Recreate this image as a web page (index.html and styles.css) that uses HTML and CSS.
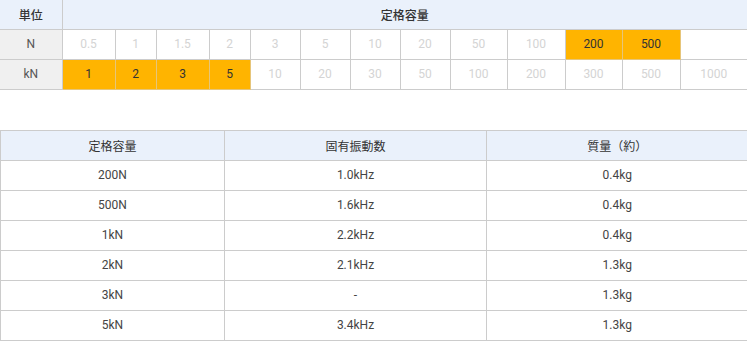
FILE: index.html
```html
<!DOCTYPE html>
<html lang="ja">
<head>
<meta charset="utf-8">
<link rel="stylesheet" href="styles.css">
</head>
<body>
<table class="cap">
  <colgroup>
    <col style="width:62px"><col style="width:53px"><col style="width:41px"><col style="width:53px"><col style="width:41px">
    <col style="width:50px"><col style="width:50px"><col style="width:50px"><col style="width:50px">
    <col style="width:57px"><col style="width:58px"><col style="width:57px"><col style="width:58px"><col style="width:67px">
  </colgroup>
  <tr class="head">
    <th class="unit">単位</th>
    <th colspan="13">定格容量</th>
  </tr>
  <tr>
    <td class="unit">N</td>
    <td>0.5</td><td>1</td><td>1.5</td><td>2</td><td>3</td><td>5</td><td>10</td><td>20</td><td>50</td><td>100</td>
    <td class="on">200</td><td class="on">500</td><td></td>
  </tr>
  <tr>
    <td class="unit">kN</td>
    <td class="on">1</td><td class="on">2</td><td class="on">3</td><td class="on">5</td>
    <td>10</td><td>20</td><td>30</td><td>50</td><td>100</td><td>200</td><td>300</td><td>500</td><td>1000</td>
  </tr>
</table>

<table class="spec">
  <colgroup>
    <col style="width:224px"><col style="width:262px"><col style="width:261px">
  </colgroup>
  <tr class="head">
    <th>定格容量</th><th>固有振動数</th><th>質量（約）</th>
  </tr>
  <tr><td>200N</td><td>1.0kHz</td><td>0.4kg</td></tr>
  <tr><td>500N</td><td>1.6kHz</td><td>0.4kg</td></tr>
  <tr><td>1kN</td><td>2.2kHz</td><td>0.4kg</td></tr>
  <tr><td>2kN</td><td>2.1kHz</td><td>1.3kg</td></tr>
  <tr><td>3kN</td><td>-</td><td>1.3kg</td></tr>
  <tr><td>5kN</td><td>3.4kHz</td><td>1.3kg</td></tr>
</table>
</body>
</html>
```

FILE: styles.css
```css
html, body {
  margin: 0;
  padding: 0;
  background: #fff;
}
body {
  font-family: Roboto, "Noto Sans CJK JP", sans-serif;
  font-size: 12px;
  color: #333;
}
table {
  border-collapse: collapse;
  table-layout: fixed;
  width: 747px;
}
th, td {
  padding: 0;
  text-align: center;
  vertical-align: middle;
  font-weight: normal;
  border: 1px solid #cccccc;
}
.cap tr {
  height: 30px;
}
.cap .head {
  height: 29px;
}
.cap tr:first-child th {
  border-top: none;
}
.cap th:first-child, .cap td:first-child {
  border-left: none;
}
.cap th:last-child, .cap td:last-child {
  border-right: none;
}
.cap td {
  color: #d4d4d4;
}
.cap .head th {
  background: #eaf1fb;
  color: #333;
  font-weight: 500;
}
.cap .unit {
  background: #f0f0f0;
  color: #555;
}
.cap .head .unit {
  background: #eaf1fb;
  color: #333;
}
.cap td.on {
  background: #ffb400;
  color: #333;
  border-color: #e6c57a;
}
.spec {
  margin-top: 40px;
}
.spec tr {
  height: 30px;
}
.spec th {
  background: #eaf1fb;
  color: #333;
}
.spec td {
  color: #444;
}
.spec th:last-child, .spec td:last-child {
  border-right: none;
}
```
